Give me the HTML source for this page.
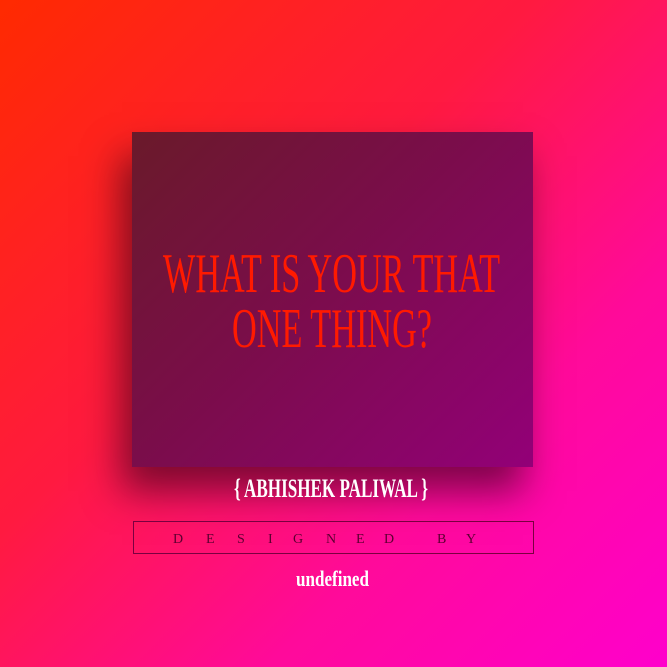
<!DOCTYPE html>
<html><head><meta charset="utf-8"><style>
html,body{margin:0;padding:0}
body{width:667px;height:667px;overflow:hidden;position:relative;background:linear-gradient(135deg,#ff2a00 0%,#ff1a40 40%,#ff0a9a 70%,#ff00cc 100%);}
.box{position:absolute;left:132px;top:132px;width:401px;height:335px;background:linear-gradient(135deg,#6a1a2a 0%,#7a0d4a 45%,#930078 100%);box-shadow:-10px 24px 36px rgba(40,0,20,0.6);}
svg{position:absolute;left:0;top:0}
.frame{position:absolute;left:133px;top:521px;width:399px;height:31px;border:1px solid #7a0040;}
</style></head><body>
<div class="box"></div>
<div class="frame"></div>
<svg width="667" height="667">
<g font-family="Liberation Serif, serif" fill="#ff1a00">
<text x="163" y="292" font-size="56" textLength="337" lengthAdjust="spacingAndGlyphs">WHAT IS YOUR THAT</text>
<text x="232" y="347" font-size="56" textLength="200" lengthAdjust="spacingAndGlyphs">ONE THING?</text>
</g>
<text x="234" y="497" font-family="Liberation Serif, serif" font-weight="bold" font-size="26" fill="#fff" textLength="194" lengthAdjust="spacingAndGlyphs">{ ABHISHEK PALIWAL }</text>
<g font-family="Liberation Serif, serif" font-size="14" fill="#5a0030">
<text x="173" y="543">D</text><text x="206" y="543">E</text><text x="237" y="543">S</text><text x="268" y="543">I</text><text x="293" y="543">G</text><text x="326" y="543">N</text><text x="356" y="543">E</text><text x="384" y="543">D</text><text x="437" y="543">B</text><text x="466" y="543">Y</text>
</g>
<text x="296" y="586" font-family="Liberation Serif, serif" font-weight="bold" font-size="22" fill="#fff" textLength="73" lengthAdjust="spacingAndGlyphs">undefined</text>
</svg>
</body></html>
